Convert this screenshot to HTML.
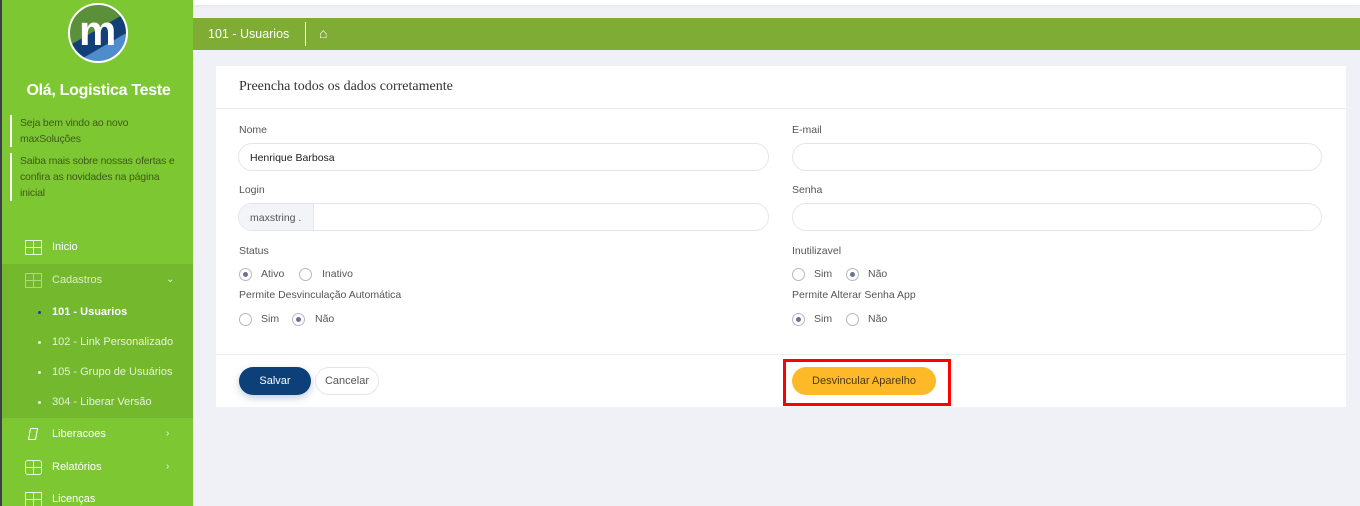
<!DOCTYPE html>
<html><head><meta charset="utf-8"><style>
*{box-sizing:border-box;margin:0;padding:0}
body{width:1360px;height:506px;overflow:hidden;background:#f0f1f6;font-family:"Liberation Sans",sans-serif;position:relative}
.sb{position:absolute;left:0;top:0;width:193px;height:506px;background:#7dc832;border-left:2px solid #3a3f4a;overflow:hidden}
.logo{position:absolute;left:66px;top:3px;width:60px;height:60px;border-radius:50%;background:linear-gradient(150deg,#5b8f3a 0%,#5b8f3a 45%,#123f78 46%,#123f78 68%,#4f8ccb 69%);border:2px solid #fff;overflow:hidden}
.logo span{position:absolute;left:9px;top:2px;color:#fff;font-weight:bold;font-size:42px;font-family:"Liberation Sans";letter-spacing:-3px}
.hi{position:absolute;left:0;width:193px;top:82px;text-align:center;color:#fff;font-weight:bold;font-size:16px;letter-spacing:-0.3px}
.msg{position:absolute;left:8px;border-left:2px solid #fff;padding-left:8px;color:#3e5a1a;font-size:10.5px;line-height:16px;width:183px;letter-spacing:-0.2px}
.nav{position:absolute;left:0;width:193px;color:#fff;font-size:11px}
.nav .it{position:absolute;left:50px}
.ic{position:absolute;left:23px;width:17px;height:15px;border:1.5px solid #e8f5d8}
.ic:before{content:"";position:absolute;left:6.5px;top:-1px;width:1.5px;height:15px;background:#e8f5d8}
.ic:after{content:"";position:absolute;left:-1px;top:5.5px;width:17px;height:1.5px;background:#e8f5d8}
.sub{position:absolute;left:0;top:264px;width:193px;height:154px;background:#74b82e}
.dot{position:absolute;left:36px;width:3px;height:3px;border-radius:50%;background:#e8f5d8}
.arr{position:absolute;left:164px;font-size:10px;color:#e8f5d8}
.top{position:absolute;left:193px;top:0;width:1167px;height:5px;background:#fff;box-shadow:0 1px 3px rgba(0,0,0,.05)}
.hdr{position:absolute;left:193px;top:18px;width:1167px;height:32px;background:#7fac35;color:#fff;font-size:12.5px}
.card{position:absolute;left:216px;top:66px;width:1130px;height:341px;background:#fff}
.lbl{position:absolute;font-size:10.5px;color:#555}
.inp{position:absolute;height:28px;border:1px solid #e4e6ef;border-radius:14px;background:#fff;font-size:10.5px;color:#222;padding:8px 11px}
.r{position:absolute;width:13px;height:13px;border:1px solid #b5b7c4;border-radius:50%}
.r.on:after{content:"";position:absolute;left:3px;top:3px;width:5px;height:5px;border-radius:50%;background:#6c7293}
.rl{position:absolute;font-size:10.5px;color:#555}
</style></head><body>
<div class="sb">
<div class="logo"><span>m</span></div>
<div class="hi">Olá, Logistica Teste</div>
<div class="msg" style="top:115px">Seja bem vindo ao novo<br>maxSoluções</div>
<div class="msg" style="top:153px">Saiba mais sobre nossas ofertas e<br>confira as novidades na página<br>inicial</div>
<div class="sub"></div>
<div class="nav" style="top:241px"><div class="ic" style="top:-1px"></div><span class="it">Inicio</span></div>
<div class="nav" style="top:274px;color:#d9efc4"><div class="ic" style="top:-1px;opacity:.5"></div><span class="it">Cadastros</span><span class="arr">⌄</span></div>
<div class="nav" style="top:306px;font-weight:bold;text-decoration:underline"><div class="dot" style="top:5px;background:#1f3f8a"></div><span class="it">101 - Usuarios</span></div>
<div class="nav" style="top:336px;color:#e6f3d6"><div class="dot" style="top:5px"></div><span class="it">102 - Link Personalizado</span></div>
<div class="nav" style="top:366px;color:#e6f3d6"><div class="dot" style="top:5px"></div><span class="it">105 - Grupo de Usuários</span></div>
<div class="nav" style="top:396px;color:#e6f3d6"><div class="dot" style="top:5px"></div><span class="it">304 - Liberar Versão</span></div>
<div class="nav" style="top:428px"><div style="position:absolute;left:27px;top:0;width:8px;height:12px;border:1.5px solid #fff;transform:skewX(-10deg)"></div><span class="it">Liberacoes</span><span class="arr">›</span></div>
<div class="nav" style="top:461px"><div class="ic" style="top:-1px;border-radius:3px"></div><span class="it">Relatórios</span><span class="arr">›</span></div>
<div class="nav" style="top:493px"><div class="ic" style="top:-1px"></div><span class="it">Licenças</span></div>
</div>
<div class="top"></div>
<div class="hdr"><span style="position:absolute;left:15px;top:9px">101 - Usuarios</span><div style="position:absolute;left:112px;top:4px;width:1px;height:24px;background:#fff"></div><span style="position:absolute;left:126px;top:7px;font-size:14px">⌂</span></div>
<div class="card">
<div style="position:absolute;left:23px;top:13px;font-family:'Liberation Serif',serif;font-size:14px;color:#333">Preencha todos os dados corretamente</div>
<div style="position:absolute;left:0;top:42px;width:1130px;height:1px;background:#ebedf2"></div>
<div class="lbl" style="left:23px;top:58px">Nome</div>
<div class="inp" style="left:22px;top:77px;width:531px">Henrique Barbosa</div>
<div class="lbl" style="left:576px;top:58px">E-mail</div>
<div class="inp" style="left:576px;top:77px;width:530px"></div>
<div class="lbl" style="left:23px;top:118px">Login</div>
<div class="inp" style="left:22px;top:137px;width:531px;padding:0;overflow:hidden"><div style="width:75px;height:28px;background:#f3f4f8;border-right:1px solid #e4e6ef;padding:8px 11px;color:#555">maxstring .</div></div>
<div class="lbl" style="left:576px;top:118px">Senha</div>
<div class="inp" style="left:576px;top:137px;width:530px"></div>
<div class="lbl" style="left:23px;top:179px">Status</div>
<div class="r on" style="left:23px;top:202px"></div><span class="rl" style="left:45px;top:202px">Ativo</span>
<div class="r" style="left:83px;top:202px"></div><span class="rl" style="left:106px;top:202px">Inativo</span>
<div class="lbl" style="left:23px;top:223px">Permite Desvinculação Automática</div>
<div class="r" style="left:23px;top:247px"></div><span class="rl" style="left:45px;top:247px">Sim</span>
<div class="r on" style="left:76px;top:247px"></div><span class="rl" style="left:99px;top:247px">Não</span>
<div class="lbl" style="left:576px;top:179px">Inutilizavel</div>
<div class="r" style="left:576px;top:202px"></div><span class="rl" style="left:598px;top:202px">Sim</span>
<div class="r on" style="left:630px;top:202px"></div><span class="rl" style="left:652px;top:202px">Não</span>
<div class="lbl" style="left:576px;top:223px">Permite Alterar Senha App</div>
<div class="r on" style="left:576px;top:247px"></div><span class="rl" style="left:598px;top:247px">Sim</span>
<div class="r" style="left:630px;top:247px"></div><span class="rl" style="left:652px;top:247px">Não</span>
<div style="position:absolute;left:0;top:288px;width:1130px;height:1px;background:#ebedf2"></div>
<div style="position:absolute;left:23px;top:301px;width:72px;height:28px;border-radius:14px;background:#0d3f78;color:#fff;font-size:11px;text-align:center;line-height:28px;box-shadow:0 3px 8px rgba(13,63,120,.25)">Salvar</div>
<div style="position:absolute;left:99px;top:301px;width:64px;height:28px;border-radius:14px;border:1px solid #e4e6ef;color:#555;font-size:11px;text-align:center;line-height:26px">Cancelar</div>
<div style="position:absolute;left:567px;top:293px;width:168px;height:47px;border:3px solid #f00"></div>
<div style="position:absolute;left:576px;top:301px;width:144px;height:28px;border-radius:14px;background:#fdb927;color:#4a3b10;font-size:11px;text-align:center;line-height:28px">Desvincular Aparelho</div>
</div>
</body></html>
